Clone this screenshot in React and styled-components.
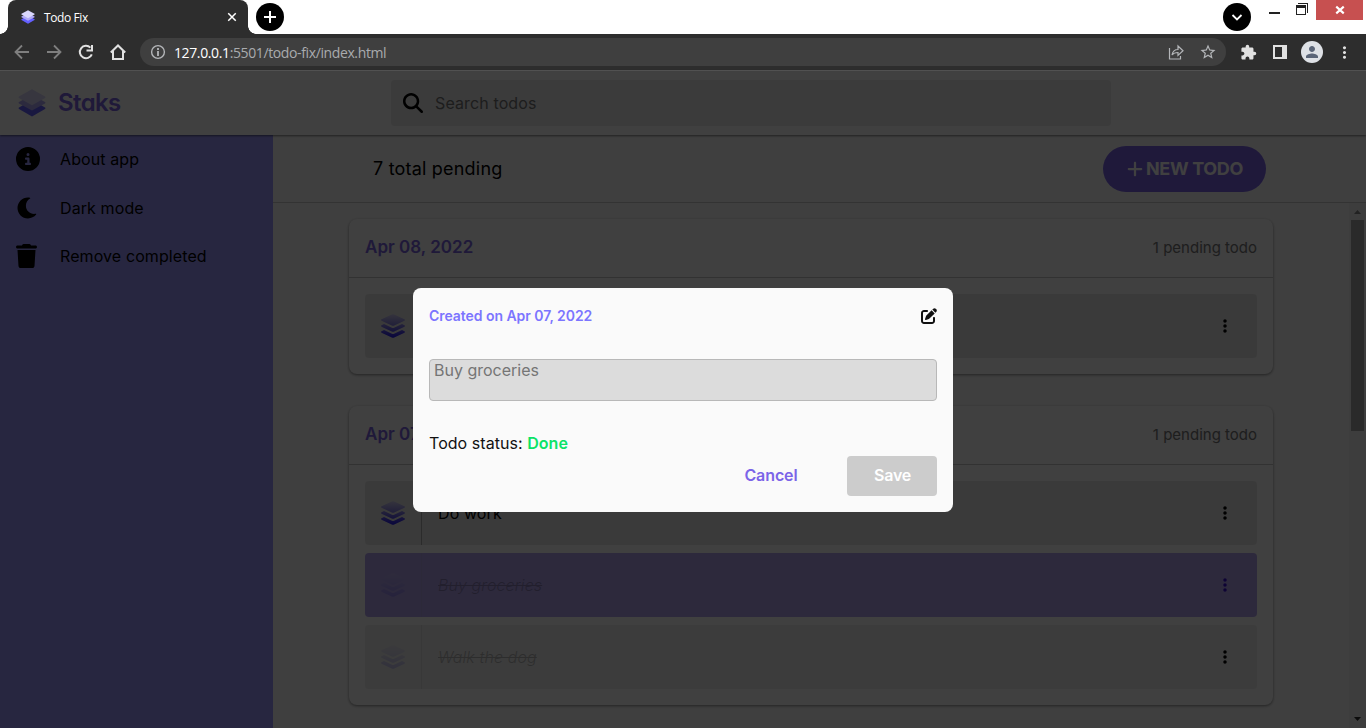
import React from "react";
import styled, { createGlobalStyle } from "styled-components";
import { FaCircleInfo, FaTrash, FaMagnifyingGlass, FaPlus, FaPenToSquare, FaEllipsisVertical } from "react-icons/fa6";
import { MdStarOutline, MdExtension, MdPerson, MdMoreVert } from "react-icons/md";

const Global = createGlobalStyle`
  * { box-sizing: border-box; }
  body { margin: 0; overflow: hidden; background: #fff; font-family: Inter, "Liberation Sans", sans-serif; }
  button { font: inherit; border: 0; padding: 0; background: none; }
  svg { display: block; flex: none; }
`;

const Window = styled.div`
  width: 1366px;
  height: 728px;
  display: flex;
  flex-direction: column;
  overflow: hidden;
`;

/* Browser frame */
const TabStrip = styled.div`
  height: 34px;
  flex: none;
  display: flex;
  padding-left: 8px;
  background: #fff;
`;
const Tab = styled.div`
  position: relative;
  width: 240px;
  height: 34px;
  display: flex;
  align-items: center;
  padding: 0 10px 0 13px;
  background: #2d2d2d;
  color: #fff;
  border-radius: 8px 8px 0 0;
  font: 12px "Open Sans", "Noto Sans", sans-serif;
  &::before, &::after {
    content: "";
    position: absolute;
    bottom: 0;
    width: 8px;
    height: 8px;
  }
  &::before { left: -8px; background: radial-gradient(circle at 0 0, transparent 7.5px, #2d2d2d 8px); }
  &::after { right: -8px; background: radial-gradient(circle at 100% 0, transparent 7.5px, #2d2d2d 8px); }
`;
const TabTitle = styled.span`
  flex: 1;
  margin-left: 9px;
  letter-spacing: -0.4px;
`;
const RoundButton = styled.button`
  width: 28px;
  height: 28px;
  margin: 3px 0 0 ${(p) => p.$gap};
  border-radius: 50%;
  background: #000;
  display: grid;
  place-items: center;
`;
const WindowControls = styled.div`
  display: flex;
  margin: 0 3px 0 18px;
  width: 94px;
`;
const CloseWindow = styled.div`
  width: 47px;
  height: 20px;
  margin-left: auto;
  background: #c75050;
  display: grid;
  place-items: center;
`;
const Toolbar = styled.div`
  height: 37px;
  flex: none;
  display: flex;
  align-items: center;
  gap: 16px;
  padding: 0 6px 0 14px;
  background: #2d2d2d;
  border-bottom: 1px solid #545454;
  color: #e1e1e1;
`;
const Address = styled.div`
  flex: 1;
  height: 28px;
  margin-left: -2px;
  margin-right: -10px;
  display: flex;
  align-items: center;
  padding: 0 9px 0 10px;
  border-radius: 14px;
  background: #3f3f3f;
  color: #b4b6b9;
`;
const AddressIcons = styled.div`
  display: flex;
  align-items: center;
  gap: 15px;
`;
const Url = styled.span`
  flex: 1;
  margin-left: 8px;
  color: #a9abae;
  font: 14px "Open Sans", "Noto Sans", sans-serif;
  letter-spacing: -0.38px;
  b { color: #fff; font-weight: 400; }
`;
const Tools = styled.div`
  display: grid;
  grid-template-columns: repeat(4, 32px);
  place-items: center;
`;
const Avatar = styled.span`
  width: 22px;
  height: 22px;
  border-radius: 50%;
  background: #dee1e6;
  color: #5b6578;
  display: grid;
  place-items: center;
`;

/* Application */
const Page = styled.div`
  position: relative;
  flex: 1;
  min-height: 0;
  display: flex;
  flex-direction: column;
  background: #fff;
  color: #000;
`;
const Header = styled.header`
  position: relative;
  z-index: 1;
  height: 64px;
  flex: none;
  display: flex;
  align-items: center;
  padding-left: 18px;
  background: #fefefe;
  box-shadow: 0 1px 2px rgba(0, 0, 0, 0.5);
`;
const Brand = styled.div`
  width: 373px;
  display: flex;
  align-items: center;
  gap: 12px;
  color: #7c64e4;
`;
const BrandName = styled.span`
  margin-top: -2px;
  font-size: 24px;
  font-weight: 600;
  letter-spacing: -0.6px;
  font-feature-settings: "cv11";
`;
const Search = styled.div`
  width: 720px;
  height: 46px;
  display: flex;
  align-items: center;
  gap: 12px;
  padding-left: 12px;
  border-radius: 4px;
  background: #eaeaea;
  color: #000;
  span { color: #757575; font-size: 16px; letter-spacing: 0.12px; }
`;
const Body = styled.div`
  flex: 1;
  min-height: 0;
  display: flex;
`;
const Sidebar = styled.nav`
  width: 273px;
  flex: none;
  background: #9c98ff;
`;
const NavItem = styled.div`
  height: 48.5px;
  display: flex;
  align-items: center;
  padding-left: 16px;
  font-size: 16px;
  letter-spacing: 0.1px;
`;
const NavIcon = styled.span`
  width: 44px;
`;
const Main = styled.main`
  flex: 1;
  min-width: 0;
  display: flex;
  flex-direction: column;
  background: #fcfcfc;
`;
const Summary = styled.div`
  height: 68px;
  flex: none;
  display: flex;
  align-items: center;
  justify-content: space-between;
  padding: 0 100px;
  border-bottom: 1px solid #ccc;
  font-size: 18px;
  letter-spacing: 0.2px;
`;
const NewTodo = styled.button`
  width: 163px;
  height: 46px;
  display: flex;
  align-items: center;
  justify-content: center;
  gap: 2px;
  border-radius: 23px;
  background: #7b64e8;
  color: #fff;
  font-size: 18px;
  font-weight: 700;
  letter-spacing: -0.35px;
`;
const ListArea = styled.div`
  flex: 1;
  min-height: 0;
  display: flex;
`;
const Cards = styled.div`
  flex: 1;
  display: flex;
  flex-direction: column;
  gap: 32px;
  padding: 16px 76px 0;
`;
const Card = styled.section`
  flex: none;
  border-radius: 8px;
  background: #fdfdfd;
  box-shadow: 0 1px 3px rgba(0, 0, 0, 0.45);
`;
const CardHead = styled.div`
  height: 59px;
  display: flex;
  align-items: center;
  justify-content: space-between;
  padding: 0 16px 2px;
  border-bottom: 1px solid #c8c8c8;
`;
const DateLabel = styled.h2`
  margin: 0;
  color: #7c64e4;
  font-size: 17px;
  font-weight: 600;
  letter-spacing: 0.02px;
`;
const Pending = styled.span`
  color: #777;
  font-size: 15px;
`;
const Rows = styled.div`
  display: flex;
  flex-direction: column;
  gap: 8px;
  padding: 16px;
`;
const Row = styled.div`
  height: 64px;
  display: flex;
  border-radius: 4px;
  background: ${(p) => (p.$active ? "#b4a4f0" : p.$done ? "#efefef" : "#e8e8e8")};
`;
const RowIcon = styled.div`
  width: 57px;
  display: flex;
  align-items: center;
  padding-left: 16px;
  border-right: 1px solid #aaa;
  opacity: ${(p) => (p.$done ? 0.2 : 1)};
`;
const RowText = styled.div`
  flex: 1;
  align-self: center;
  padding-left: 16px;
  font-size: 16px;
  letter-spacing: 0.1px;
  ${(p) => p.$done && "opacity: 0.24; font-style: italic; font-weight: 300; text-decoration: line-through;"}
`;
const RowMenu = styled.div`
  width: 40px;
  display: flex;
  align-items: center;
  color: ${(p) => (p.$active ? "#3b0fd0" : "#000")};
`;
const Scrollbar = styled.div`
  width: 17px;
  display: flex;
  flex-direction: column;
  align-items: center;
  justify-content: space-between;
  background: #f1f1f1;
`;
const Thumb = styled.div`
  width: 13px;
  height: 211px;
  margin-bottom: auto;
  background: #a8a8a8;
`;
const Overlay = styled.div`
  position: absolute;
  z-index: 2;
  inset: 0;
  background: rgba(0, 0, 0, 0.75);
  display: flex;
  align-items: center;
  justify-content: center;
`;
const Dialog = styled.div`
  width: 540px;
  height: 224px;
  display: flex;
  flex-direction: column;
  padding: 16px;
  border-radius: 8px;
  background: #fafafa;
  color: #111;
`;
const DialogHead = styled.div`
  height: 24px;
  display: flex;
  align-items: center;
  justify-content: space-between;
  color: #7c75ff;
  font-size: 14px;
  font-weight: 600;
  letter-spacing: -0.05px;
  svg { color: #111; }
`;
const Field = styled.div`
  height: 42px;
  margin-top: 31px;
  padding: 1px 4px;
  border: 1px solid #b8b8b8;
  border-radius: 4px;
  background: #dcdcdc;
  color: #757575;
  font-size: 16px;
  line-height: 19px;
`;
const Status = styled.div`
  margin-top: 32px;
  font-size: 16px;
  line-height: 20px;
  letter-spacing: 0.05px;
  b { color: #0be368; font-weight: 600; }
`;
const Actions = styled.div`
  display: flex;
  justify-content: flex-end;
  margin-top: 3px;
  font-size: 16px;
  font-weight: 600;
`;
const Cancel = styled.button`
  width: 90px;
  margin-right: 31px;
  padding-bottom: 2px;
  color: #7b64e8;
  letter-spacing: -0.1px;
`;
const Save = styled.button`
  width: 90px;
  height: 40px;
  padding: 0 0 2px 1px;
  border-radius: 4px;
  background: #ccc;
  color: #fff;
  letter-spacing: -0.2px;
`;

const Logo = ({ size }) => (
  <svg width={size} height={size} viewBox="0 0 28 28">
    <path d="M1 18.6 14 11l13 7.6c.6.4.6 1 0 1.400L14 27.600 1 20c-.6-.4-.6-1 0-1.400z" fill="#6460ff" />
    <path d="M1 13 14 6l13 7c.6.4.6 1 0 1.400L14 21.600 1 14.400c-.6-.4-.6-1 0-1.400z" fill="#b0a9f5" />
    <path d="M1 7.600 14 .3l13 7.300c.6.4.6 1 0 1.400L14 16.300 1 9c-.6-.4-.6-1 0-1.400z" fill="#d9d6fb" />
  </svg>
);

const Stack = () => (
  <svg width="24" height="24" viewBox="0 0 24 24">
    <defs>
      <linearGradient id="stack" x1="0" y1="0" x2="0" y2="24" gradientUnits="userSpaceOnUse">
        <stop offset="0" stopColor="#d2cff0" />
        <stop offset="0.5" stopColor="#8078e4" />
        <stop offset="1" stopColor="#2014f0" />
      </linearGradient>
    </defs>
    <g fill="url(#stack)">
      <path d="M.5 5.300 11.300.3q.7-.3 1.400 0L23.500 5.300q.9.700 0 1.400L12.700 11.700q-.7.3-1.400 0L.5 6.700q-.9-.7 0-1.400z" />
      <path d="M.5 11.300 3 10.100l7.900 3.600q1.100.4 2.200 0L21 10.100l2.500 1.200q.9.700 0 1.400L12.700 17.700q-.7.3-1.400 0L.5 12.700q-.9-.7 0-1.400z" />
      <path d="M.5 17.300 3 16.100l7.900 3.600q1.100.4 2.200 0L21 16.100l2.500 1.200q.9.700 0 1.400L12.700 23.700q-.7.3-1.400 0L.5 18.700q-.9-.7 0-1.400z" />
    </g>
  </svg>
);

const Moon = () => (
  <svg width="24" height="24" viewBox="0 0 512 512" fill="currentColor">
    <path d="M32 256C32 132.200 132.300 32 255.800 32c11.360 0 29.700 1.668 40.900 3.746 9.616 1.777 11.750 14.630 3.279 19.440C245 86.500 211.200 144.600 211.200 207.800c0 109.700 99.710 193 208.300 172.300 9.561-1.805 16.280 9.324 10.110 16.950C387.900 448.600 324.800 480 255.800 480 132.100 480 32 379.600 32 256z" />
  </svg>
);

const Line = ({ d, size = 16, color = "currentColor", width = 2 }) => (
  <svg width={size} height={size} viewBox="0 0 16 16" fill="none" stroke={color} strokeWidth={width}>
    <path d={d} />
  </svg>
);

const nav = [
  ["About app", <FaCircleInfo size={24} />],
  ["Dark mode", <Moon />],
  ["Remove completed", <FaTrash style={{ width: 21, height: 24 }} />],
];

const days = [
  { date: "Apr 08, 2022", todos: [{ text: "" }] },
  {
    date: "Apr 07, 2022",
    todos: [{ text: "Do work" }, { text: "Buy groceries", done: true, active: true }, { text: "Walk the dog", done: true }],
  },
];

function Browser() {
  return (
    <>
      <TabStrip>
        <Tab>
          <Logo size={14} />
          <TabTitle>Todo Fix</TabTitle>
          <Line size={12} d="M3 3l10 10M13 3L3 13" />
        </Tab>
        <RoundButton $gap="8px"><Line d="M8 2v12M2 8h12" color="#fff" /></RoundButton>
        <RoundButton $gap="auto"><Line d="M3.500 6L8 10.500 12.500 6" color="#fff" width={1.800} /></RoundButton>
        <WindowControls>
          <svg width="39" height="20" viewBox="0 0 39 20" shapeRendering="crispEdges">
            <path d="M0 12h11v2H0z" fill="#222" />
            <path d="M29 3h10v10h-1V4h-9zM27 5h10v10H27zm1 3v6h8V8z" fill="#222" fillRule="evenodd" />
          </svg>
          <CloseWindow><Line size={12} width={2.800} color="#fff" d="M3 3.500l10 9M13 3.500l-10 9" /></CloseWindow>
        </WindowControls>
      </TabStrip>
      <Toolbar>
        <Line color="#7f7f7f" d="M15 8H2M8 1.500L1.500 8 8 14.500" width={1.800} />
        <Line color="#7f7f7f" d="M1 8h13M8 1.500L14.500 8 8 14.500" width={1.800} />
        <Line d="M13.800 10.300A6.200 6.200 0 1 1 12.400 3.600M14 1v5.500H8.500" />
        <Line d="M.8 8.500L8 1.500l7.200 7M3 7v8h10V7" />
        <Address>
          <svg width="16" height="16" viewBox="0 0 16 16" fill="none" stroke="currentColor">
            <circle cx="8" cy="8" r="6.400" strokeWidth="1.400" />
            <path d="M8 7v5M8 4v2" strokeWidth="1.800" />
          </svg>
          <Url><b>127.0.0.1</b>:5501/todo-fix/index.html</Url>
          <AddressIcons>
            <Line d="M1.500 4v11h11v-3M4 11c.8-4 3-5.500 6-5.500V2l5 4.700-5 4.700V8.500c-3 0-4.500.5-6 2.500z" width={1.200} />
            <MdStarOutline size={18} />
          </AddressIcons>
        </Address>
        <Tools>
          <MdExtension size={17} />
          <svg width="14" height="14" viewBox="0 0 14 14"><path d="M0 0h14v14H0zm2 2v10h7V2z" fill="currentColor" fillRule="evenodd" /></svg>
          <Avatar><MdPerson size={18} /></Avatar>
          <MdMoreVert size={19} />
        </Tools>
      </Toolbar>
    </>
  );
}

export default function App() {
  return (
    <Window>
      <Global />
      <Browser />
      <Page>
        <Header>
          <Brand><Logo size={28} /><BrandName>Staks</BrandName></Brand>
          <Search><FaMagnifyingGlass size={20} /><span>Search todos</span></Search>
        </Header>
        <Body>
          <Sidebar>
            {nav.map(([label, icon]) => <NavItem key={label}><NavIcon>{icon}</NavIcon>{label}</NavItem>)}
          </Sidebar>
          <Main>
            <Summary>7 total pending<NewTodo><FaPlus size={18} />NEW TODO</NewTodo></Summary>
            <ListArea>
              <Cards>
                {days.map((day) => (
                  <Card key={day.date}>
                    <CardHead><DateLabel>{day.date}</DateLabel><Pending>1 pending todo</Pending></CardHead>
                    <Rows>
                      {day.todos.map((t) => (
                        <Row key={t.text} $active={t.active} $done={t.done}>
                          <RowIcon $done={t.done}><Stack /></RowIcon>
                          <RowText $done={t.done}>{t.text}</RowText>
                          <RowMenu $active={t.active}><FaEllipsisVertical size={16} /></RowMenu>
                        </Row>
                      ))}
                    </Rows>
                  </Card>
                ))}
              </Cards>
              <Scrollbar>
                <svg width="17" height="17" viewBox="0 0 17 17"><path d="M5 11l3.500-4 3.500 4z" fill="#888" /></svg>
                <Thumb />
                <svg width="17" height="17" viewBox="0 0 17 17"><path d="M5 6l3.500 4L12 6z" fill="#333" /></svg>
              </Scrollbar>
            </ListArea>
          </Main>
        </Body>
        <Overlay>
          <Dialog>
            <DialogHead>Created on Apr 07, 2022<FaPenToSquare size={16} /></DialogHead>
            <Field>Buy groceries</Field>
            <Status>Todo status: <b>Done</b></Status>
            <Actions><Cancel>Cancel</Cancel><Save>Save</Save></Actions>
          </Dialog>
        </Overlay>
      </Page>
    </Window>
  );
}
